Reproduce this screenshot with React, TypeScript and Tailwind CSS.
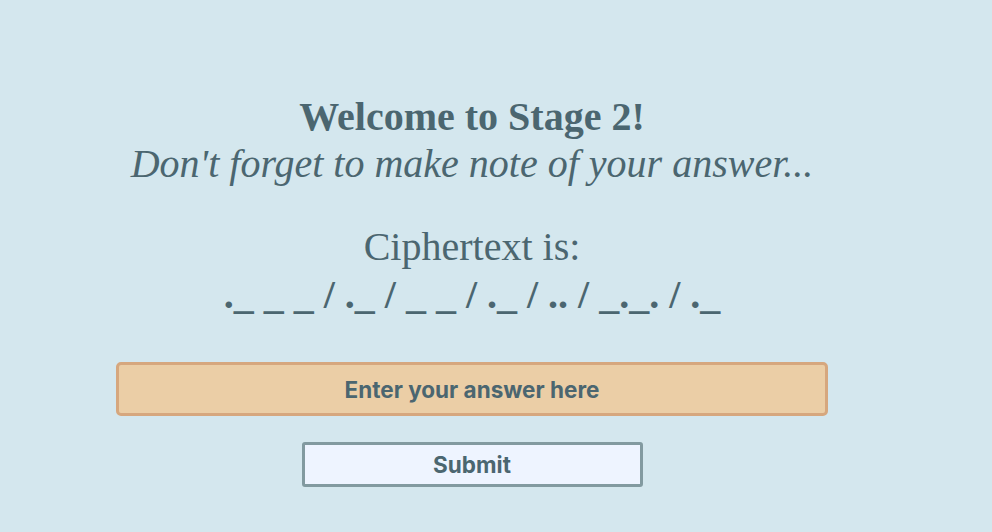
export default function App() {
  return (
    <div className="min-h-screen w-full bg-[#d4e7ee] text-[#4b6670] overflow-hidden">
      <div className="ml-[116px] w-[712px] pt-[93px] text-center">
        <div className="font-['Liberation_Serif',serif] text-[40px]">
          <h1 className="leading-[47px] font-bold">Welcome to Stage 2!</h1>
          <p className="leading-[47px] italic">Don't forget to make note of your answer...</p>
          <p className="mt-[36px] leading-[47px]">Ciphertext is:</p>
          <p className="leading-[49px] font-bold">._ _ _ / ._ / _ _ / ._ / .. / _._. / ._</p>
        </div>

        <form className="mt-[43px] flex flex-col items-center" onSubmit={(e) => e.preventDefault()}>
          <input
            type="text"
            placeholder="Enter your answer here"
            className="h-[54px] w-full rounded-[5px] border-[3px] border-[#d6a77e] bg-[#ebcea6] text-center font-['Inter',sans-serif] text-[22.5px] font-bold text-[#4b6670] placeholder:text-[#4b6670] outline-none"
          />
          <button
            type="submit"
            className="mt-[26px] h-[45px] w-[341px] rounded-[3px] border-[3px] border-[#829aa0] bg-[#eef4ff] font-['Inter',sans-serif] text-[22.5px] font-bold text-[#4b6670]"
          >
            Submit
          </button>
        </form>
      </div>
    </div>
  );
}
